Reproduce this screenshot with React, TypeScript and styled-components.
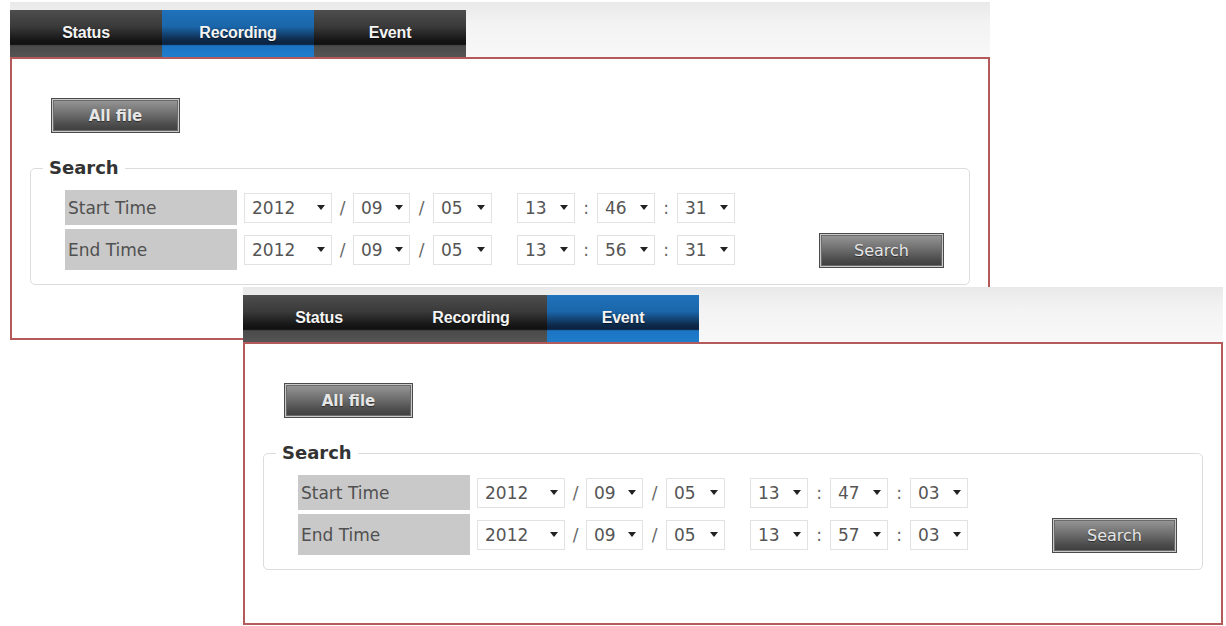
import React from 'react';
import styled, { createGlobalStyle } from 'styled-components';

const GlobalStyle = createGlobalStyle`
  html, body {
    margin: 0;
    padding: 0;
    background: #ffffff;
  }
  body {
    font-family: "DejaVu Sans", Verdana, sans-serif;
  }
`;

const Desk = styled.div`
  position: relative;
  width: 1226px;
  height: 626px;
  overflow: hidden;
  background: #ffffff;
`;

// each settings window sits at its own spot on the desk
const Window = styled.div<{ $x: number; $y: number }>`
  position: absolute;
  left: ${p => p.$x}px;
  top: ${p => p.$y}px;
  width: 980px;
  display: flex;
  flex-direction: column;
`;

const HeaderStrip = styled.div`
  height: 55px;
  display: flex;
  align-items: flex-end;
  background: linear-gradient(to bottom, #e9e9e9 0%, #f3f3f3 40%, #f8f8f8 100%);
`;

const TabBar = styled.div`
  display: flex;
  height: 47px;
`;

const Tab = styled.div<{ $active?: boolean }>`
  width: 152px;
  display: flex;
  align-items: center;
  justify-content: center;
  padding-bottom: 2px;
  box-sizing: border-box;
  font-family: "Liberation Sans", Arial, sans-serif;
  font-weight: 700;
  font-size: 16px;
  letter-spacing: -0.2px;
  color: #f4f4f4;
  text-shadow: 0 1px 1px rgba(0, 0, 0, 0.6);
  background: ${p =>
    p.$active
      ? 'linear-gradient(to bottom, #1f72bc 0%, #1b66aa 35%, #0d2a4a 64%, #0b2240 73%, #1c74c4 76%, #1f7dcc 100%)'
      : 'linear-gradient(to bottom, #4e4e4e 0%, #3a3a3a 35%, #161616 64%, #101010 73%, #4a4a4a 76%, #555555 100%)'};
`;

const Body = styled.div`
  height: 283px;
  box-sizing: border-box;
  background: #ffffff;
  border: 2px solid #b45a5a;
  padding: 39px 18px 0 18px;
  display: flex;
  flex-direction: column;
`;

const DarkButton = styled.button<{ $bold?: boolean }>`
  width: 129px;
  height: 35px;
  border: 1px solid #4a4a4a;
  box-shadow: inset 0 0 0 1px #c9c9c9, inset 0 0 0 2px #6a6a6a;
  background: linear-gradient(to bottom, #9a9a9a 0%, #6e6e6e 45%, #4a4a4a 80%, #3c3c3c 100%);
  color: #e6e6e6;
  font-family: "DejaVu Sans", Verdana, sans-serif;
  font-size: ${p => (p.$bold ? '15px' : '16px')};
  font-weight: ${p => (p.$bold ? 700 : 400)};
  text-shadow: 0 1px 1px rgba(0, 0, 0, 0.5);
  padding: 0;
  cursor: pointer;
`;

const AllFileButton = styled(DarkButton)`
  margin-left: 21px;
`;

const SearchButton = styled(DarkButton)`
  width: 125px;
  margin: 0 25px 2px auto;
  align-self: flex-end;
`;

const SearchBox = styled.fieldset`
  margin: 24px 0 0 0;
  padding: 0 0 14px 0;
  border: 1px solid #dcdcdc;
  border-radius: 5px;
  display: flex;
  align-items: flex-start;
`;

const Legend = styled.legend`
  margin-left: 12px;
  padding: 0 6px;
  font-size: 18px;
  font-weight: 700;
  line-height: 22px;
  color: #333333;
`;

const Rows = styled.div`
  margin: 11px 0 0 34px;
  display: flex;
  flex-direction: column;
  gap: 4px;
`;

const Row = styled.div<{ $tall?: boolean }>`
  display: flex;
  align-items: center;
  height: ${p => (p.$tall ? 41 : 35)}px;
`;

const Label = styled.div`
  width: 172px;
  height: 100%;
  box-sizing: border-box;
  padding-left: 3px;
  display: flex;
  align-items: center;
  background: #c9c9c9;
  color: #505050;
  font-size: 17px;
  margin-right: 7px;
`;

const Select = styled.div<{ $w: number }>`
  width: ${p => p.$w}px;
  height: 30px;
  box-sizing: border-box;
  border: 1px solid #e2e2e2;
  background: #ffffff;
  display: flex;
  align-items: center;
  justify-content: space-between;
  padding: 0 6px 0 7px;
  color: #555555;
  font-size: 17px;
`;

const Arrow = styled.span`
  width: 0;
  height: 0;
  border-left: 4px solid transparent;
  border-right: 4px solid transparent;
  border-top: 5px solid #222222;
`;

const Sep = styled.span<{ $w: number }>`
  width: ${p => p.$w}px;
  text-align: center;
  color: #666666;
  font-size: 17px;
`;

const Spacer = styled.span`
  width: 25px;
`;

type Stamp = [string, string, string, string, string, string];

const Drop = ({ w, value }: { w: number; value: string }) => (
  <Select $w={w}>
    <span>{value}</span>
    <Arrow />
  </Select>
);

const TimeRow = ({ label, t, tall }: { label: string; t: Stamp; tall?: boolean }) => (
  <Row $tall={tall}>
    <Label>{label}</Label>
    <Drop w={88} value={t[0]} />
    <Sep $w={21}>/</Sep>
    <Drop w={57} value={t[1]} />
    <Sep $w={23}>/</Sep>
    <Drop w={59} value={t[2]} />
    <Spacer />
    <Drop w={58} value={t[3]} />
    <Sep $w={22}>:</Sep>
    <Drop w={58} value={t[4]} />
    <Sep $w={22}>:</Sep>
    <Drop w={58} value={t[5]} />
  </Row>
);

const tabs = ['Status', 'Recording', 'Event'];

interface PanelProps {
  x: number;
  y: number;
  active: string;
  start: Stamp;
  end: Stamp;
}

const Panel = ({ x, y, active, start, end }: PanelProps) => (
  <Window $x={x} $y={y}>
    <HeaderStrip>
      <TabBar>
        {tabs.map(t => (
          <Tab key={t} $active={t === active}>
            {t}
          </Tab>
        ))}
      </TabBar>
    </HeaderStrip>
    <Body>
      <div>
        <AllFileButton $bold>All file</AllFileButton>
      </div>
      <SearchBox>
        <Legend>Search</Legend>
        <Rows>
          <TimeRow label="Start Time" t={start} />
          <TimeRow label="End Time" t={end} tall />
        </Rows>
        <SearchButton>Search</SearchButton>
      </SearchBox>
    </Body>
  </Window>
);

const App: React.FC = () => (
  <>
    <GlobalStyle />
    <Desk>
      <Panel
        x={10}
        y={2}
        active="Recording"
        start={['2012', '09', '05', '13', '46', '31']}
        end={['2012', '09', '05', '13', '56', '31']}
      />
      <Panel
        x={243}
        y={287}
        active="Event"
        start={['2012', '09', '05', '13', '47', '03']}
        end={['2012', '09', '05', '13', '57', '03']}
      />
    </Desk>
  </>
);

export default App;
